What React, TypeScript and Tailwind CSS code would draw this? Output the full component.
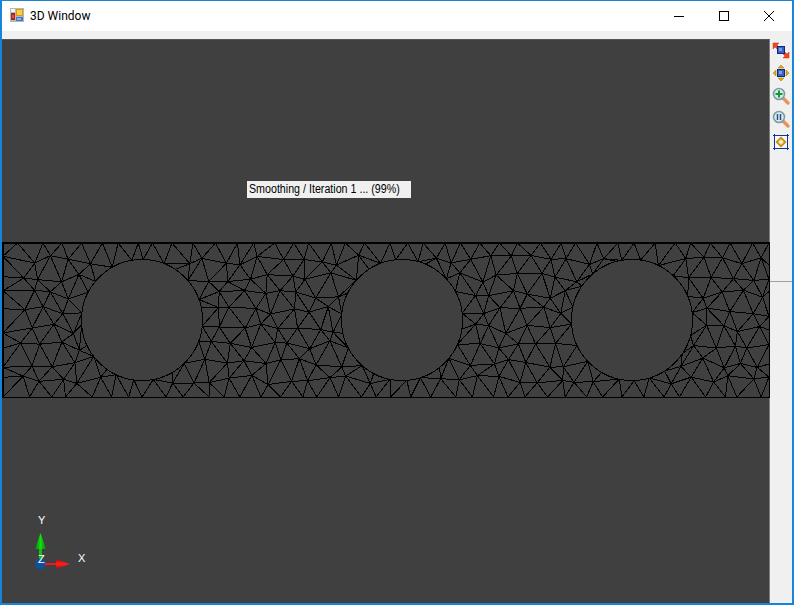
// mesh area, in viewport coordinates
const MESH = { left: 1, right: 767, top: 203, bottom: 357 };
const HOLES = [
  { x: 140, y: 280 },
  { x: 400, y: 280 },
  { x: 630, y: 280 },
];
const HOLE_R = 60.5;

function buildMesh() {
  let seed = 4711;
  const rand = () => {
    seed = (seed * 16807) % 2147483647;
    return seed / 2147483647 - 0.5;
  };
  const rows = 9;
  const cols = 40;
  const dy = (MESH.bottom - MESH.top) / rows;
  const dx = (MESH.right - MESH.left) / cols;
  const pts: [number, number][][] = [];

  for (let r = 0; r <= rows; r++) {
    const row: [number, number][] = [];
    for (let c = 0; c <= cols; c++) {
      let x = MESH.left + c * dx + (r % 2 ? dx / 2 : 0);
      let y = MESH.top + r * dy;
      if (c > 0 && c < cols) x += rand() * 10;
      if (r > 0 && r < rows) y += rand() * 10;
      if (c === 0) x = MESH.left;
      if (c === cols) x = MESH.right;
      for (const h of HOLES) {
        const d = Math.hypot(x - h.x, y - h.y);
        if (d < HOLE_R + 6) {
          x = h.x + ((x - h.x) / d) * HOLE_R;
          y = h.y + ((y - h.y) / d) * HOLE_R;
        }
      }
      row.push([x, y]);
    }
    pts.push(row);
  }

  const seg = (a: [number, number], b: [number, number]) =>
    `M${a[0].toFixed(1)} ${a[1].toFixed(1)}L${b[0].toFixed(1)} ${b[1].toFixed(1)}`;
  let d = "";
  for (let r = 0; r <= rows; r++) {
    for (let c = 0; c <= cols; c++) {
      const p = pts[r][c];
      if (c < cols) d += seg(p, pts[r][c + 1]);
      if (r < rows) {
        d += seg(p, pts[r + 1][c]);
        const diag = r % 2 ? c + 1 : c - 1;
        if (diag >= 0 && diag <= cols) d += seg(p, pts[r + 1][diag]);
      }
    }
  }
  return d;
}

const meshPath = buildMesh();

function AppIcon() {
  return (
    <svg width="16" height="16" viewBox="0 0 16 16" shapeRendering="crispEdges">
      <rect x="0" y="0" width="14" height="14" fill="#b8b8b8" />
      <rect x="1" y="1" width="4" height="3" fill="#f4f4f4" />
      <rect x="1" y="5" width="4" height="7" fill="#a8281c" />
      <rect x="2" y="7" width="2" height="3" fill="#e05040" />
      <rect x="6" y="1" width="7" height="7" fill="#d89a18" />
      <rect x="7" y="2" width="5" height="5" fill="#f8d040" />
      <rect x="6" y="9" width="7" height="4" fill="#3c78d0" />
      <rect x="7" y="10" width="4" height="2" fill="#88b4ec" />
    </svg>
  );
}

function IconFit() {
  return (
    <svg width="18" height="18" viewBox="0 0 18 18">
      <path d="M1 2l6 0-2 2 2 2-2 2-2-2-2 2z" fill="#f0481c" stroke="#c82c10" strokeWidth="0.5" />
      <path d="M17 17l-6 0 2-2-2-2 2-2 2 2 2-2z" fill="#f0481c" stroke="#c82c10" strokeWidth="0.5" />
      <rect x="5.500" y="5.500" width="7" height="7" fill="#3a62c0" stroke="#10287c" />
      <rect x="7" y="7" width="3" height="3" fill="#7c9ce0" />
    </svg>
  );
}

function IconPan() {
  return (
    <svg width="18" height="18" viewBox="0 0 18 18">
      <path d="M9 1l3 3h-6zM9 17l-3-3h6zM1 9l3-3v6zM17 9l-3 3v-6z" fill="#e8a810" stroke="#a87408" strokeWidth="0.5" />
      <rect x="5.500" y="5.500" width="7" height="7" fill="#3a62c0" stroke="#10287c" />
      <rect x="7" y="7" width="3" height="3" fill="#7c9ce0" />
    </svg>
  );
}

function IconZoom({ plus }: { plus: boolean }) {
  return (
    <svg width="18" height="18" viewBox="0 0 18 18">
      <path d="M11 11l5 5" stroke="#e8925a" strokeWidth="3.200" strokeLinecap="round" />
      <circle cx="7" cy="7" r="5.500" fill="#d6ecf0" stroke="#7f9ca6" strokeWidth="1.600" />
      {plus ? (
        <path d="M3.500 7h7M7 3.500v7" stroke="#129a2c" strokeWidth="2" />
      ) : (
        <path d="M5.500 4v6M8.500 4v6" stroke="#33507c" strokeWidth="1.500" />
      )}
    </svg>
  );
}

function IconBox() {
  return (
    <svg width="18" height="18" viewBox="0 0 18 18">
      <rect x="2.500" y="2.500" width="13" height="13" fill="#f8f8f8" stroke="#1030a8" />
      <path d="M1 2.500h4M2.500 1v4M13 2.500h4M15.500 1v4M1 15.500h4M2.500 13v4M13 15.500h4M15.500 13v4" stroke="#1030a8" />
      <path d="M9 4.500l4.500 4.500-4.500 4.500-4.500-4.500z" fill="#f0c040" stroke="#c08c10" strokeWidth="1.500" />
      <rect x="7.500" y="7.500" width="3" height="3" fill="#f8f8f8" />
    </svg>
  );
}

function AxisGizmo() {
  return (
    <svg width="60" height="60" viewBox="0 0 60 60">
      <defs>
        <linearGradient id="ga" x1="0" x2="1" y1="0" y2="0">
          <stop offset="0" stopColor="#0a7a0a" />
          <stop offset="0.5" stopColor="#12e012" />
          <stop offset="1" stopColor="#0a7a0a" />
        </linearGradient>
        <linearGradient id="ra" x1="0" x2="0" y1="0" y2="1">
          <stop offset="0" stopColor="#a01010" />
          <stop offset="0.5" stopColor="#ff2020" />
          <stop offset="1" stopColor="#a01010" />
        </linearGradient>
      </defs>
      <rect x="9" y="27" width="3" height="14" fill="#12c012" />
      <path d="M10.500 13l5.500 16h-11z" fill="url(#ga)" />
      <circle cx="10.500" cy="44" r="5.500" fill="#0f4f9c" />
      <rect x="15" y="43" width="12" height="2" fill="#f01818" />
      <path d="M40 44l-14 5v-10z" fill="url(#ra)" />
    </svg>
  );
}

export default function App() {
  return (
    <div className="flex h-[605px] w-[794px] flex-col overflow-hidden border-x-2 border-b-2 border-t border-[#1883d7] bg-[#f0f0f0] font-['Roboto',sans-serif]">
      {/* Title bar */}
      <div className="flex h-[30px] shrink-0 items-center bg-white text-black">
        <div className="ml-[8px] flex w-[16px] justify-center">
          <AppIcon />
        </div>
        <span className="ml-[4px] text-[12px]">3D Window</span>
        <div className="ml-auto mr-px flex h-full items-center">
          <div className="flex w-[45px] justify-center">
            <div className="h-px w-[10px] bg-black" />
          </div>
          <div className="flex w-[45px] justify-center">
            <div className="h-[10px] w-[10px] border border-black" />
          </div>
          <div className="flex w-[45px] justify-center">
            <svg width="10" height="10" viewBox="0 0 10 10">
              <path d="M0 0l10 10M10 0L0 10" stroke="#000" strokeWidth="1" />
            </svg>
          </div>
        </div>
      </div>
      <div className="h-[8px] shrink-0" />

      <div className="flex min-h-0 flex-1">
        {/* 3D viewport */}
        <div className="relative h-full w-[768px] shrink-0 border-r border-t border-r-[#7c7c7c] border-t-[#555] bg-[#404040]">
          <svg width="768" height="565" className="absolute left-0 top-0" shapeRendering="crispEdges">
            <path d={meshPath} stroke="#000" strokeWidth="1" fill="none" />
            <rect
              x={MESH.left - 0.5}
              y={MESH.top - 0.5}
              width={MESH.right - MESH.left + 1}
              height={MESH.bottom - MESH.top + 1}
              fill="none"
              stroke="#000"
            />
            {HOLES.map((h) => (
              <circle key={h.x} cx={h.x} cy={h.y} r={HOLE_R} fill="#404040" stroke="#000" />
            ))}
          </svg>

          <div className="absolute left-[245px] top-[141px] flex h-[17px] w-[164px] items-center bg-[#f0f0f0] pb-[2px] pl-[2px] font-['Liberation_Sans',sans-serif] text-[12px] whitespace-nowrap text-black">
            <span className="origin-left scale-x-[0.89]">Smoothing / Iteration 1 ... (99%)</span>
          </div>

          <div className="absolute left-[28px] top-[480px]">
            <AxisGizmo />
          </div>
          <span className="absolute left-[36px] top-[472px] font-['Liberation_Sans',sans-serif] text-[11px] text-white">Y</span>
          <span className="absolute left-[36px] top-[511px] font-['Liberation_Sans',sans-serif] text-[11px] text-white">Z</span>
          <span className="absolute left-[76px] top-[510px] font-['Liberation_Sans',sans-serif] text-[11px] text-white">X</span>
        </div>

        {/* Side toolbar */}
        <div className="flex flex-1 flex-col items-center">
          <div className="h-[23px] pt-[2px]"><IconFit /></div>
          <div className="h-[23px] pt-[2px]"><IconPan /></div>
          <div className="h-[23px] pt-[2px]"><IconZoom plus /></div>
          <div className="h-[23px] pt-[2px]"><IconZoom plus={false} /></div>
          <div className="h-[23px] pt-[2px]"><IconBox /></div>
          <div className="mt-[127px] h-px w-full bg-[#a0a0a0]" />
        </div>
      </div>
    </div>
  );
}
